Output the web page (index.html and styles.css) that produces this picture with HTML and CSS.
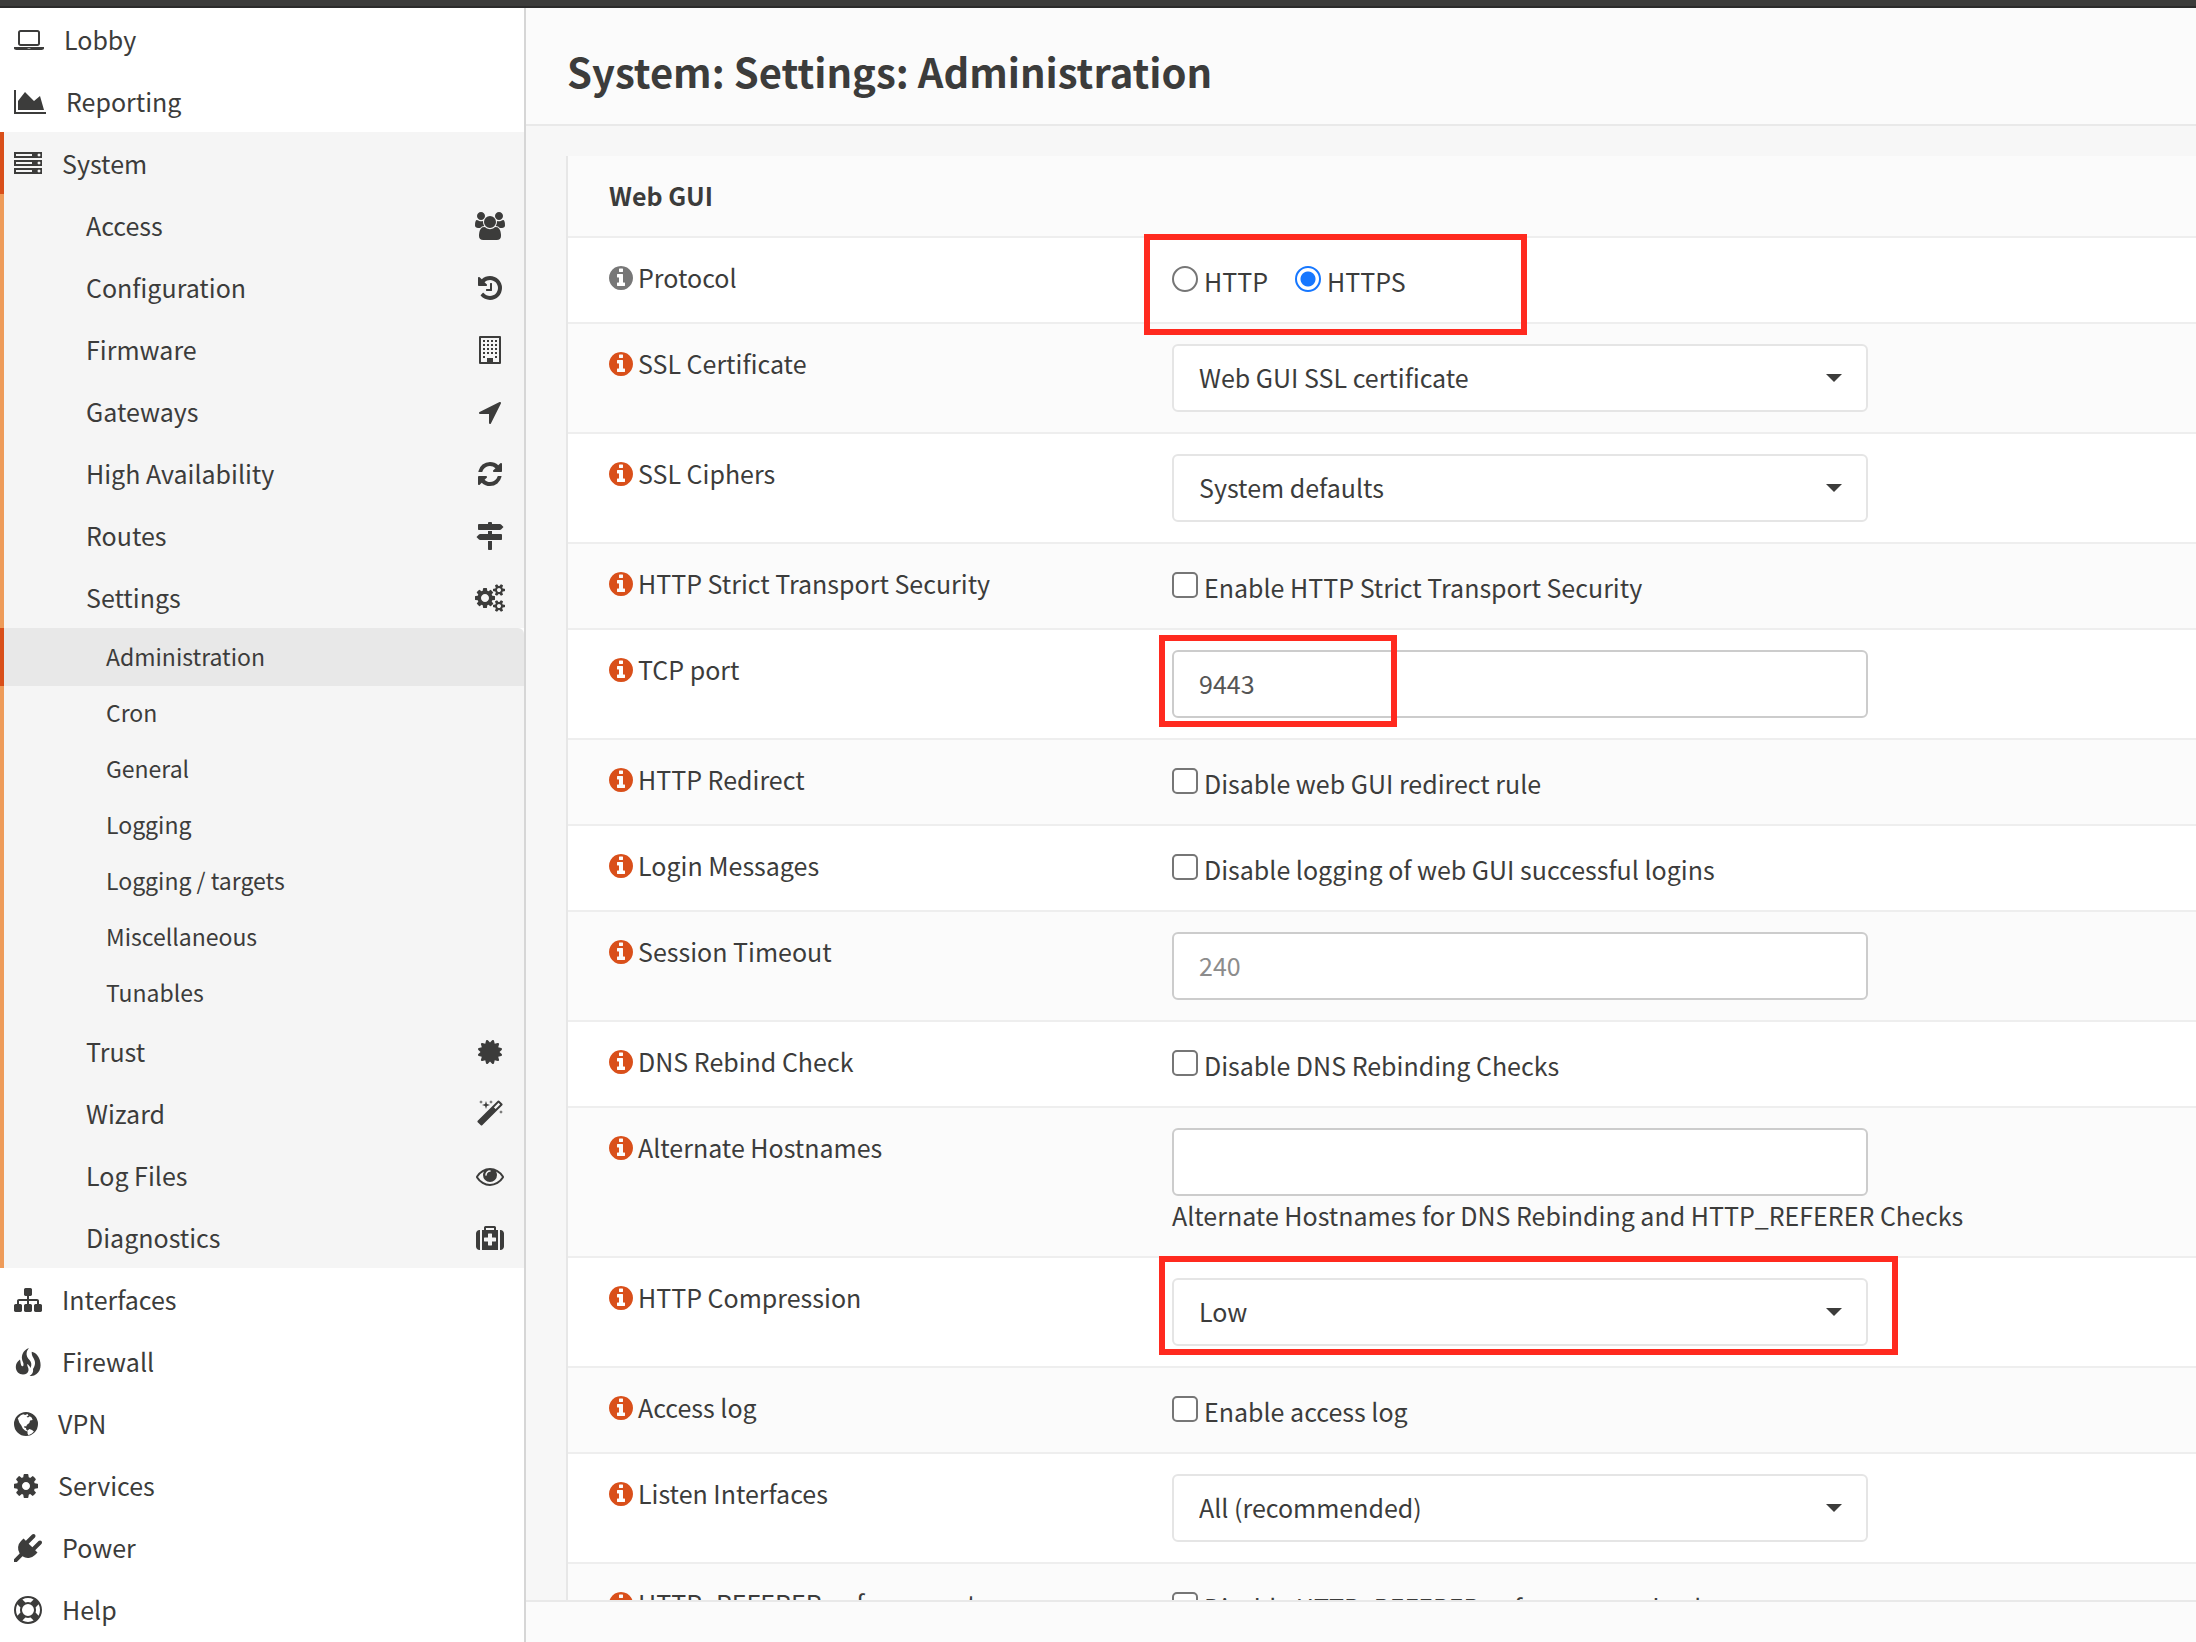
FILE: index.html
```html
<!DOCTYPE html>
<html lang="en">
<head>
<meta charset="utf-8">
<meta name="viewport" content="width=device-width, initial-scale=1">
<title>Administration | Settings | System</title>
<link rel="stylesheet" href="styles.css">
</head>
<body>
<svg class="sprite" aria-hidden="true">
  <symbol id="i-laptop" viewBox="0 0 1920 1792"><path d="M416 1280q-66 0-113-47t-47-113v-704q0-66 47-113t113-47h1088q66 0 113 47t47 113v704q0 66-47 113t-113 47h-1088zm-32-864v704q0 13 9.500 22.500t22.500 9.500h1088q13 0 22.500-9.500t9.500-22.500v-704q0-13-9.500-22.500t-22.500-9.500h-1088q-13 0-22.500 9.500t-9.500 22.500zm1376 928h160v96q0 40-47 68t-113 28h-1600q-66 0-113-28t-47-68v-96h1760zm-720 96q16 0 16-16t-16-16h-160q-16 0-16 16t16 16h160z"/></symbol>
  <symbol id="i-chart" viewBox="0 0 2048 1792"><path d="M2048 1536v128h-2048v-1536h128v1408h1920zm-384-1024l256 896h-1664v-576l448-576 576 576z"/></symbol>
  <symbol id="i-server" viewBox="0 0 1792 1792"><path d="M128 1408h1024v-128h-1024v128zm0-512h1024v-128h-1024v128zm1568 448q0-40-28-68t-68-28-68 28-28 68 28 68 68 28 68-28 28-68zm-1568-960h1024v-128h-1024v128zm1568 448q0-40-28-68t-68-28-68 28-28 68 28 68 68 28 68-28 28-68zm0-512q0-40-28-68t-68-28-68 28-28 68 28 68 68 28 68-28 28-68zm96 832v384h-1792v-384h1792zm0-512v384h-1792v-384h1792zm0-512v384h-1792v-384h1792z"/></symbol>
  <symbol id="i-users" viewBox="0 0 1920 1792"><path d="M593 896q-162 5-265 128h-134q-82 0-138-40.500t-56-118.500q0-353 124-353 6 0 43.500 21t97.500 42.500 119 21.500q67 0 133-23-5 37-5 66 0 139 81 256zm1071 637q0 120-73 189.500t-194 69.500h-874q-121 0-194-69.500t-73-189.500q0-53 3.500-103.500t14-109 26.500-108.500 43-97.500 62-81 85.500-53.500 111.500-20q10 0 43 21.500t73 48 107 48 135 21.500 135-21.500 107-48 73-48 43-21.500q61 0 111.500 20t85.500 53.500 62 81 43 97.500 26.500 108.500 14 109 3.500 103.500zm-1024-1277q0 106-75 181t-181 75-181-75-75-181 75-181 181-75 181 75 75 181zm704 384q0 159-112.500 271.500t-271.500 112.500-271.500-112.500-112.500-271.500 112.500-271.500 271.500-112.500 271.500 112.500 112.500 271.500zm576 225q0 78-56 118.500t-138 40.500h-134q-103-123-265-128 81-117 81-256 0-29-5-66 66 23 133 23 59 0 119-21.500t97.500-42.500 43.500-21q124 0 124 353zm-128-609q0 106-75 181t-181 75-181-75-75-181 75-181 181-75 181 75 75 181z"/></symbol>
  <symbol id="i-history" viewBox="0 0 1792 1792"><path d="M1664 896q0 156-61 298t-164 245-245 164-298 61q-172 0-327-72.500t-264-204.500q-7-10-6.500-22.500t8.500-20.500l137-138q10-9 25-9 16 2 23 12 73 95 179 147t225 52q104 0 198.500-40.500t163.500-109.500 109.500-163.500 40.500-198.500-40.500-198.500-109.500-163.500-163.500-109.500-198.500-40.500q-98 0-188 35.500t-160 101.500l137 138q31 30 14 69-17 40-59 40h-448q-26 0-45-19t-19-45v-448q0-42 40-59 39-17 69 14l130 129q107-101 244.500-156.500t284.500-55.500q156 0 298 61t245 164 164 245 61 298zm-640-288v448q0 14-9 23t-23 9h-320q-14 0-23-9t-9-23v-64q0-14 9-23t23-9h224v-352q0-14 9-23t23-9h64q14 0 23 9t9 23z"/></symbol>
  <symbol id="i-building" viewBox="0 0 22 28"><path fill-rule="evenodd" d="M1 0h20q1 0 1 1v26q0 1-1 1H1q-1 0-1-1V1q0-1 1-1zM2 2v24h6v-4h6v4h6V2z"/><path d="M4 4h2v2H4zM8 4h2v2H8zM12 4h2v2h-2zM16 4h2v2h-2zM4 8h2v2H4zM8 8h2v2H8zM12 8h2v2h-2zM16 8h2v2h-2zM4 12h2v2H4zM8 12h2v2H8zM12 12h2v2h-2zM16 12h2v2h-2zM4 16h2v2H4zM8 16h2v2H8zM12 16h2v2h-2zM16 16h2v2h-2zM4 20h2v2H4zM16 20h2v2h-2zM8 22h6v4H8z"/></symbol>
  <symbol id="i-arrow" viewBox="0 0 1792 1792"><path d="M1593 349l-640 1280q-17 35-57 35-5 0-15-2-22-5-35.500-22.500t-13.500-39.500v-576h-576q-22 0-39.500-13.500t-22.500-35.500 4-42 29-30l1280-640q13-7 29-7 27 0 45 19 15 14 18.500 34.500t-6.500 39.500z"/></symbol>
  <symbol id="i-refresh" viewBox="0 0 1792 1792"><path d="M1639 1056q0 5-1 7-64 268-268 434.500t-478 166.500q-146 0-282.500-55t-243.500-157l-129 129q-19 19-45 19t-45-19-19-45v-448q0-26 19-45t45-19h448q26 0 45 19t19 45-19 45l-137 137q71 66 161 102t187 36q134 0 250-65t186-179q11-17 53-117 8-23 30-23h192q13 0 22.500 9.500t9.500 22.500zm25-800v448q0 26-19 45t-45 19h-448q-26 0-45-19t-19-45 19-45l138-138q-148-137-349-137-134 0-250 65t-186 179q-11 17-53 117-8 23-30 23h-199q-13 0-22.500-9.500t-9.500-22.500v-7q65-268 270-434.500t480-166.500q146 0 284 55.500t245 156.500l130-129q19-19 45-19t45 19 19 45z"/></symbol>
  <symbol id="i-signs" viewBox="0 0 1792 1792"><path d="M1745 297q10 10 10 23t-10 23l-141 141q-28 28-68 28h-1344q-26 0-45-19t-19-45v-256q0-26 19-45t45-19h576v-64q0-26 19-45t45-19h128q26 0 45 19t19 45v64h512q40 0 68 28zm-977 919h256v512q0 26-19 45t-45 19h-128q-26 0-45-19t-19-45v-512zm832-448q26 0 45 19t19 45v256q0 26-19 45t-45 19h-1344q-40 0-68-28l-141-141q-10-10-10-23t10-23l141-141q28-28 68-28h512v-192h256v192h576z"/></symbol>
  <symbol id="i-cogs" viewBox="0 0 1920 1792"><path d="M896 896q0-106-75-181t-181-75-181 75-75 181 75 181 181 75 181-75 75-181zm768 512q0-52-38-90t-90-38-90 38-38 90q0 53 37.500 90.500t90.500 37.500 90.500-37.500 37.500-90.500zm0-1024q0-52-38-90t-90-38-90 38-38 90q0 53 37.500 90.500t90.500 37.500 90.500-37.500 37.500-90.500zm-384 421v185q0 10-7 19.500t-16 10.500l-155 24q-11 35-32 76 34 48 90 115 7 11 7 20 0 12-7 19-23 30-82.500 89.500t-78.500 59.500q-11 0-21-7l-115-90q-37 19-77 31-11 108-23 155-7 24-30 24h-186q-11 0-20-7.500t-10-17.500l-23-153q-34-10-75-31l-118 89q-7 7-20 7-11 0-21-8-144-133-144-160 0-9 7-19 10-14 41-53t47-61q-23-44-35-82l-152-24q-10-1-17-9.500t-7-19.500v-185q0-10 7-19.500t16-10.500l155-24q11-35 32-76-34-48-90-115-7-11-7-20 0-12 7-20 22-30 82-89t79-59q11 0 21 7l115 90q34-18 77-32 11-108 23-154 7-24 30-24h186q11 0 20 7.500t10 17.500l23 153q34 10 75 31l118-89q8-7 20-7 11 0 21 8 144 133 144 160 0 8-7 19-12 16-42 54t-45 60q23 48 34 82l152 23q10 2 17 10.500t7 19.500zm640 533v140q0 16-149 31-12 27-30 52 51 113 51 138 0 4-4 7-122 71-124 71-8 0-46-47t-52-68q-20 2-30 2t-30-2q-14 21-52 68t-46 47q-2 0-124-71-4-3-4-7 0-25 51-138-18-25-30-52-149-15-149-31v-140q0-16 149-31 13-29 30-52-51-113-51-138 0-4 4-7 4-2 35-20t59-34 30-16q8 0 46 46.500t52 67.500q20-2 30-2t30 2q51-71 92-112l6-2q4 0 124 70 4 3 4 7 0 25-51 138 17 23 30 52 149 15 149 31zm0-1024v140q0 16-149 31-12 27-30 52 51 113 51 138 0 4-4 7-122 71-124 71-8 0-46-47t-52-68q-20 2-30 2t-30-2q-14 21-52 68t-46 47q-2 0-124-71-4-3-4-7 0-25 51-138-18-25-30-52-149-15-149-31v-140q0-16 149-31 13-29 30-52-51-113-51-138 0-4 4-7 4-2 35-20t59-34 30-16q8 0 46 46.500t52 67.500q20-2 30-2t30 2q51-71 92-112l6-2q4 0 124 70 4 3 4 7 0 25-51 138 17 23 30 52 149 15 149 31z"/></symbol>
  <symbol id="i-certificate" viewBox="0 0 1792 1792"><path d="M1504 896l138 135q30 28 20 70-12 41-52 51l-188 48 53 186q12 41-19 70-29 31-70 19l-186-53-48 188q-10 40-51 52-12 2-19 2-31 0-51-22l-135-138-135 138q-28 30-70 20-41-11-51-52l-48-188-186 53q-41 12-70-19-31-29-19-70l53-186-188-48q-40-10-52-51-10-42 20-70l138-135-138-135q-30-28-20-70 12-41 52-51l188-48-53-186q-12-41 19-70 29-31 70-19l186 53 48-188q10-41 51-51 41-12 70 19l135 139 135-139q29-30 70-19 41 10 51 51l48 188 186-53q41-12 70 19 31 29 19 70l-53 186 188 48q40 10 52 51 10 42-20 70z"/></symbol>
  <symbol id="i-magic" viewBox="0 0 1792 1792"><path d="M1254 581l293-293-107-107-293 293zm447-293q0 27-18 45l-1286 1286q-18 18-45 18t-45-18l-198-198q-18-18-18-45t18-45l1286-1286q18-18 45-18t45 18l198 198q18 18 18 45zm-1351-190l98 30-98 30-30 98-30-98-98-30 98-30 30-98zm350 162l196 60-196 60-60 196-60-196-196-60 196-60 60-196zm930 478l98 30-98 30-30 98-30-98-98-30 98-30 30-98zm-640-640l98 30-98 30-30 98-30-98-98-30 98-30 30-98z"/></symbol>
  <symbol id="i-eye" viewBox="0 0 1792 1792"><path d="M1664 960q-152-236-381-353 61 104 61 225 0 185-131.500 316.500t-316.500 131.500-316.500-131.500-131.500-316.500q0-121 61-225-229 117-381 353 133 205 333.500 326.500t434.500 121.500 434.500-121.500 333.500-326.500zm-720-384q0-20-14-34t-34-14q-125 0-214.500 89.500t-89.500 214.500q0 20 14 34t34 14 34-14 14-34q0-86 61-147t147-61q20 0 34-14t14-34zm848 384q0 34-20 69-140 230-376.500 368.500t-499.500 138.500-499.500-139-376.500-368q-20-35-20-69t20-69q140-229 376.500-368t499.500-139 499.500 139 376.500 368q20 35 20 69z"/></symbol>
  <symbol id="i-medkit" viewBox="0 0 1792 1792"><path d="M1280 1088v-192q0-14-9-23t-23-9h-224v-224q0-14-9-23t-23-9h-192q-14 0-23 9t-9 23v224h-224q-14 0-23 9t-9 23v192q0 14 9 23t23 9h224v224q0 14 9 23t23 9h192q14 0 23-9t9-23v-224h224q14 0 23-9t9-23zm-640-704h512v-128h-512v128zm-384 0v1280h-32q-92 0-158-66t-66-158v-832q0-92 66-158t158-66h32zm1152 0v1280h-1024v-1280h128v-160q0-40 28-68t68-28h576q40 0 68 28t28 68v160h128zm384 224v832q0 92-66 158t-158 66h-32v-1280h32q92 0 158 66t66 158z"/></symbol>
  <symbol id="i-sitemap" viewBox="0 0 1792 1792"><path d="M1792 1248v320q0 40-28 68t-68 28h-320q-40 0-68-28t-28-68v-320q0-40 28-68t68-28h96v-192h-512v192h96q40 0 68 28t28 68v320q0 40-28 68t-68 28h-320q-40 0-68-28t-28-68v-320q0-40 28-68t68-28h96v-192h-512v192h96q40 0 68 28t28 68v320q0 40-28 68t-68 28h-320q-40 0-68-28t-28-68v-320q0-40 28-68t68-28h96v-192q0-52 38-90t90-38h512v-192h-96q-40 0-68-28t-28-68v-320q0-40 28-68t68-28h320q40 0 68 28t28 68v320q0 40-28 68t-68 28h-96v192h512q52 0 90 38t38 90v192h96q40 0 68 28t28 68z"/></symbol>
  <symbol id="i-fire" viewBox="0 0 28 28"><path d="M14.800 0C9 2.500 7.500 7 8 11c.3 2.500 1.800 3.500 1.500 6-.2 1.600-1.700 1.600-2.300.2C6.500 15.500 6.600 13.500 6 11.500 3 13.500 1.800 16.500 1.800 19c0 4.500 3.200 7.500 7.200 7.500 3 0 5-1.500 5.500-4 .5-2.500-1.500-4-1.300-6.500 1.300.5 2.300 2 3.300 4 1.500-3 1-6-1-8-2-2-3.300-4.500-2.900-7 .2-2 1.400-3.500 2.200-5z"/><path d="M17.800 3.800c3.700.7 6.700 4.200 8 8.200 1.700 6 .7 11-3.300 14-2 1.600-4.500 2.200-6.900 2 2.900-2 3.900-4 3.400-7 2-3 2.600-6 1.400-9-1-2.600-3.200-4.600-2.600-8.200z"/></symbol>
  <symbol id="i-globe" viewBox="0 0 24 28"><path fill-rule="evenodd" d="M12 2a12 12 0 1 1 0 24 12 12 0 0 1 0-24zM3.800 8.300l3-3.100 2.400-.9 2 .8 2.300-1 1 1.300-2 1.300 1.500.8 1.800-1.300 2 1.500.8 2.300-2.500.5-.8 2.500-2.300 1.800-.8 1.700-1.700-.6-.4 1.600 1.800.6.6 2 1.400 1-.6.5-2.300-1.200-2.200-1.900-1.600-3.200-1.800-2.600zM13.600 20.600l1.800-1.600 2.600.9 1.900 1.600-2 2-3.400 1.700-1-1.700z"/></symbol>
  <symbol id="i-cog" viewBox="128 0 1536 1792"><path d="M1152 896q0-106-75-181t-181-75-181 75-75 181 75 181 181 75 181-75 75-181zm512-109v222q0 12-8 23t-20 13l-185 28q-19 54-39 91 35 50 107 138 10 12 10 25t-9 23q-27 37-99 108t-94 71q-12 0-26-9l-138-108q-44 23-91 38-16 136-29 186-7 28-36 28h-222q-14 0-24.500-8.500t-11.500-21.500l-28-184q-49-16-90-37l-141 107q-10 9-25 9-14 0-25-11-126-114-165-168-7-10-7-23 0-12 8-23 15-21 51-66.500t54-70.500q-27-50-41-99l-183-27q-13-2-21-12.500t-8-23.500v-222q0-12 8-23t19-13l186-28q14-46 39-92-40-57-107-138-10-12-10-24 0-10 9-23 26-36 98.500-107.500t94.500-71.500q13 0 26 10l138 107q44-23 91-38 16-136 29-186 7-28 36-28h222q14 0 24.500 8.500t11.500 21.500l28 184q49 16 90 37l142-107q9-9 24-9 13 0 25 10 129 119 165 170 7 8 7 22 0 12-8 23-15 21-51 66.500t-54 70.500q26 50 41 98l183 28q13 2 21 12.500t8 23.500z"/></symbol>
  <symbol id="i-plug" viewBox="0 0 1792 1792"><path d="M1755 453q37 38 37 90.500t-37 90.500l-401 400 150 150-160 160q-163 163-389.500 186.500t-411.500-100.500l-362 362h-181v-181l362-362q-124-185-100.500-411.500t186.500-389.500l160-160 150 150 400-401q38-37 91-37t90 37 37 90.500-37 90.500l-400 401 234 234 401-400q38-37 91-37t90 37z"/></symbol>
  <symbol id="i-ring" viewBox="0 0 1792 1792"><path d="M896 0q182 0 348 71t286 191 191 286 71 348-71 348-191 286-286 191-348 71-348-71-286-191-191-286-71-348 71-348 191-286 286-191 348-71zm0 128q-190 0-361 90l194 194q82-28 167-28t167 28l194-194q-171-90-361-90zm-678 1129l194-194q-28-82-28-167t28-167l-194-194q-90 171-90 361t90 361zm678 407q190 0 361-90l-194-194q-82 28-167 28t-167-28l-194 194q171 90 361 90zm0-384q159 0 271.500-112.500t112.500-271.500-112.500-271.500-271.500-112.500-271.500 112.500-112.500 271.500 112.500 271.500 271.500 112.500zm484-217l194 194q90-171 90-361t-90-361l-194 194q28 82 28 167t-28 167z"/></symbol>
  <symbol id="i-info" viewBox="128 0 1536 1792"><path d="M1152 1376v-160q0-14-9-23t-23-9h-96v-512q0-14-9-23t-23-9h-320q-14 0-23 9t-9 23v160q0 14 9 23t23 9h96v320h-96q-14 0-23 9t-9 23v160q0 14 9 23t23 9h448q14 0 23-9t9-23zm-128-896v-160q0-14-9-23t-23-9h-192q-14 0-23 9t-9 23v160q0 14 9 23t23 9h192q14 0 23-9t9-23zm640 416q0 209-103 385.500t-279.500 279.500-385.500 103-385.500-103-279.500-279.500-103-385.500 103-385.500 279.500-279.500 385.500-103 385.500 103 279.500 279.500 103 385.500z"/></symbol>
</svg>

<div class="topbar"></div>
<div class="shell">
  <nav class="sidebar" aria-label="Main menu">
    <a class="item" href="#"><svg class="icon" width="30"><use href="#i-laptop"/></svg>Lobby</a>
    <a class="item" href="#"><svg class="icon" width="32"><use href="#i-chart"/></svg>Reporting</a>
    <a class="item item-open" href="#"><svg class="icon" width="28"><use href="#i-server"/></svg>System</a>
    <div class="submenu">
      <a class="subitem" href="#">Access<svg class="icon" width="30"><use href="#i-users"/></svg></a>
      <a class="subitem" href="#">Configuration<svg class="icon" width="28"><use href="#i-history"/></svg></a>
      <a class="subitem" href="#">Firmware<svg class="icon" width="22"><use href="#i-building"/></svg></a>
      <a class="subitem" href="#">Gateways<svg class="icon" width="28"><use href="#i-arrow"/></svg></a>
      <a class="subitem" href="#">High Availability<svg class="icon" width="28"><use href="#i-refresh"/></svg></a>
      <a class="subitem" href="#">Routes<svg class="icon" width="28"><use href="#i-signs"/></svg></a>
      <a class="subitem" href="#">Settings<svg class="icon" width="30"><use href="#i-cogs"/></svg></a>
      <a class="leaf leaf-active" href="#">Administration</a>
      <a class="leaf" href="#">Cron</a>
      <a class="leaf" href="#">General</a>
      <a class="leaf" href="#">Logging</a>
      <a class="leaf" href="#">Logging / targets</a>
      <a class="leaf" href="#">Miscellaneous</a>
      <a class="leaf" href="#">Tunables</a>
      <a class="subitem" href="#">Trust<svg class="icon" width="28"><use href="#i-certificate"/></svg></a>
      <a class="subitem" href="#">Wizard<svg class="icon" width="28"><use href="#i-magic"/></svg></a>
      <a class="subitem" href="#">Log Files<svg class="icon" width="28"><use href="#i-eye"/></svg></a>
      <a class="subitem" href="#">Diagnostics<svg class="icon" width="28"><use href="#i-medkit"/></svg></a>
    </div>
    <a class="item" href="#"><svg class="icon" width="28"><use href="#i-sitemap"/></svg>Interfaces</a>
    <a class="item" href="#"><svg class="icon" width="28"><use href="#i-fire"/></svg>Firewall</a>
    <a class="item" href="#"><svg class="icon" width="24"><use href="#i-globe"/></svg>VPN</a>
    <a class="item" href="#"><svg class="icon" width="24"><use href="#i-cog"/></svg>Services</a>
    <a class="item" href="#"><svg class="icon" width="28"><use href="#i-plug"/></svg>Power</a>
    <a class="item" href="#"><svg class="icon" width="28"><use href="#i-ring"/></svg>Help</a>
  </nav>

  <div class="page">
    <header class="page-head"><h1>System: Settings: Administration</h1></header>
    <main class="scroll">
      <form class="panel">
        <h2 class="panel-title">Web GUI</h2>
        <div class="row" role="radiogroup" aria-labelledby="l-proto">
          <span class="label" id="l-proto"><svg class="icon info-muted" width="24"><use href="#i-info"/></svg>Protocol</span>
          <div class="control choices">
            <label class="choice"><input type="radio" name="proto"><span>HTTP</span></label>
            <label class="choice"><input type="radio" name="proto" checked><span>HTTPS</span></label>
            <div class="mark mark-protocol"></div>
          </div>
        </div>
        <div class="row">
          <label class="label" for="cert"><svg class="icon" width="24"><use href="#i-info"/></svg>SSL Certificate</label>
          <div class="control"><div class="dropdown"><select class="field" id="cert"><option>Web GUI SSL certificate</option></select></div></div>
        </div>
        <div class="row">
          <label class="label" for="ciphers"><svg class="icon" width="24"><use href="#i-info"/></svg>SSL Ciphers</label>
          <div class="control"><div class="dropdown"><select class="field" id="ciphers"><option>System defaults</option></select></div></div>
        </div>
        <div class="row">
          <label class="label" for="hsts"><svg class="icon" width="24"><use href="#i-info"/></svg>HTTP Strict Transport Security</label>
          <div class="control"><label class="choice"><input type="checkbox" id="hsts"><span>Enable HTTP Strict Transport Security</span></label></div>
        </div>
        <div class="row">
          <label class="label" for="port"><svg class="icon" width="24"><use href="#i-info"/></svg>TCP port</label>
          <div class="control"><input class="field" type="text" id="port" value="9443"><div class="mark mark-port"></div></div>
        </div>
        <div class="row">
          <label class="label" for="redirect"><svg class="icon" width="24"><use href="#i-info"/></svg>HTTP Redirect</label>
          <div class="control"><label class="choice"><input type="checkbox" id="redirect"><span>Disable web GUI redirect rule</span></label></div>
        </div>
        <div class="row">
          <label class="label" for="login"><svg class="icon" width="24"><use href="#i-info"/></svg>Login Messages</label>
          <div class="control"><label class="choice"><input type="checkbox" id="login"><span>Disable logging of web GUI successful logins</span></label></div>
        </div>
        <div class="row">
          <label class="label" for="timeout"><svg class="icon" width="24"><use href="#i-info"/></svg>Session Timeout</label>
          <div class="control"><input class="field" type="text" id="timeout" placeholder="240"></div>
        </div>
        <div class="row">
          <label class="label" for="rebind"><svg class="icon" width="24"><use href="#i-info"/></svg>DNS Rebind Check</label>
          <div class="control"><label class="choice"><input type="checkbox" id="rebind"><span>Disable DNS Rebinding Checks</span></label></div>
        </div>
        <div class="row">
          <label class="label" for="althosts"><svg class="icon" width="24"><use href="#i-info"/></svg>Alternate Hostnames</label>
          <div class="control"><input class="field" type="text" id="althosts"><p class="note">Alternate Hostnames for DNS Rebinding and HTTP_REFERER Checks</p></div>
        </div>
        <div class="row">
          <label class="label" for="compression"><svg class="icon" width="24"><use href="#i-info"/></svg>HTTP Compression</label>
          <div class="control"><div class="dropdown"><select class="field" id="compression"><option>Low</option></select></div><div class="mark mark-compression"></div></div>
        </div>
        <div class="row">
          <label class="label" for="accesslog"><svg class="icon" width="24"><use href="#i-info"/></svg>Access log</label>
          <div class="control"><label class="choice"><input type="checkbox" id="accesslog"><span>Enable access log</span></label></div>
        </div>
        <div class="row">
          <label class="label" for="listen"><svg class="icon" width="24"><use href="#i-info"/></svg>Listen Interfaces</label>
          <div class="control"><div class="dropdown"><select class="field" id="listen"><option>All (recommended)</option></select></div></div>
        </div>
        <div class="row">
          <label class="label" for="referer"><svg class="icon" width="24"><use href="#i-info"/></svg>HTTP_REFERER enforcement</label>
          <div class="control"><label class="choice"><input type="checkbox" id="referer"><span>Disable HTTP_REFERER enforcement check</span></label></div>
        </div>
      </form>
    </main>
    <footer class="page-foot"></footer>
  </div>
</div>
</body>
</html>
```
FILE: styles.css
```css
* {
  box-sizing: border-box;
}

body {
  margin: 0;
  height: 100vh;
  display: flex;
  flex-direction: column;
  overflow: hidden;
  background: #f7f7f7;
  color: #3c3c3b;
  font-family: "Noto Sans CJK SC", "Noto Sans", sans-serif;
  font-size: 25px;
  line-height: 40px;
}

a {
  color: inherit;
  text-decoration: none;
}

.sprite {
  display: none;
}

.icon {
  flex: none;
  height: 28px;
  fill: currentColor;
}

.topbar {
  flex: none;
  height: 8px;
  background: #3c3c3b;
  border-bottom: 2px solid #2b2b2b;
}

.shell {
  flex: 1;
  min-height: 0;
  display: flex;
}

/* Sidebar */

.sidebar {
  flex: none;
  width: 526px;
  overflow: hidden;
  background: #fff;
  border-right: 2px solid #d6d6d6;
}

.item,
.subitem {
  display: flex;
  align-items: center;
  height: 62px;
  line-height: 62px;
}

.item {
  gap: 20px;
  padding-left: 10px;
  border-left: 4px solid transparent;
}

.item .icon,
.subitem .icon {
  margin-top: 2px;
}

.item-open {
  background: #f5f5f5;
  border-left-color: #d94f1a;
}

.subitem,
.leaf {
  border-left: 4px solid #ee9b59;
  background: #f5f5f5;
}

.subitem {
  justify-content: space-between;
  padding-left: 82px;
}

/* icons share one centre line whatever their own width */
.subitem .icon {
  width: 36px;
  margin-right: 16px;
}

.leaf {
  display: block;
  height: 58px;
  margin-bottom: -2px;
  padding-left: 102px;
  font-size: 23px;
  line-height: 56px;
}

.leaf-active {
  position: relative;
  background: #e8e8e8;
  border-left-color: #d94f1a;
  border-top-right-radius: 6px;
}

/* Page */

.page {
  flex: 1;
  min-width: 0;
  display: flex;
  flex-direction: column;
}

.page-head {
  flex: none;
  padding: 33px 41px 23px;
  background: #fbfbfb;
  border-bottom: 2px solid #e9e9e9;
}

h1 {
  margin: 0;
  font-size: 40px;
  font-weight: 600;
  line-height: 60px;
}

.scroll {
  flex: 1;
  min-height: 0;
  overflow: hidden;
  padding: 30px 0 0 40px;
}

.page-foot {
  flex: none;
  height: 42px;
  background: #fbfbfb;
  border-top: 2px solid #e9e9e9;
}

/* Form */

.panel {
  border-left: 2px solid #e7e7e7;
}

.panel-title {
  margin: 0;
  padding: 19px 41px 21px;
  background: #fbfbfb;
  font-size: 25px;
  font-weight: 600;
  line-height: 40px;
}

.row {
  display: grid;
  grid-template-columns: 563px 1fr;
  align-items: start;
  padding: 20px 0 20px 41px;
  background: #fff;
  border-top: 2px solid #eee;
}

.row:nth-child(odd) {
  background: #fbfbfb;
}

.label {
  display: flex;
  align-items: center;
  gap: 5px;
  line-height: 38px;
}

.label .icon {
  margin-top: 2px;
  fill: #d94f1a;
}

.label .info-muted {
  fill: #777;
}

.control {
  position: relative;
  width: 696px;
}

.choices {
  display: flex;
  gap: 27px;
}

.choice {
  display: flex;
  align-items: flex-start;
  gap: 6px;
}

.choice span {
  padding: 3px 0 1px;
}

.choice input {
  appearance: none;
  flex: none;
  width: 26px;
  height: 26px;
  margin: 8px 0 0;
  background: #fff;
  border: 2px solid #767676;
  border-radius: 5px;
}

.choice input[type="radio"] {
  border-radius: 50%;
}

.choice input[type="radio"]:checked {
  border-color: #1677ff;
  background: radial-gradient(circle, #1677ff 7px, #fff 8px);
}

.field {
  display: block;
  width: 100%;
  height: 68px;
  padding: 0 25px 2px;
  background: #fff;
  border: 2px solid #ccc;
  border-radius: 6px;
  color: #555;
  font: inherit;
}

.field::placeholder {
  color: #8c8c8c;
  opacity: 1;
}

.dropdown {
  position: relative;
}

.dropdown .field {
  appearance: none;
  border-color: #e5e5e5;
  color: #3c3c3b;
}

.dropdown::after {
  content: "";
  position: absolute;
  top: 30px;
  right: 26px;
  border: 8px solid transparent;
  border-top-color: #3c3c3b;
  border-bottom: 0;
  pointer-events: none;
}

.note {
  margin: 0;
  padding-bottom: 2px;
  line-height: 38px;
  white-space: nowrap;
}

/* Red call-out frames drawn over the controls */

.mark {
  position: absolute;
  border: 6px solid #ff2a1f;
  pointer-events: none;
}

.mark-protocol {
  top: -24px;
  left: -28px;
  width: 383px;
  height: 101px;
}

.mark-port {
  top: -15px;
  left: -13px;
  width: 238px;
  height: 92px;
}

.mark-compression {
  top: -22px;
  left: -13px;
  width: 739px;
  height: 99px;
}
```
